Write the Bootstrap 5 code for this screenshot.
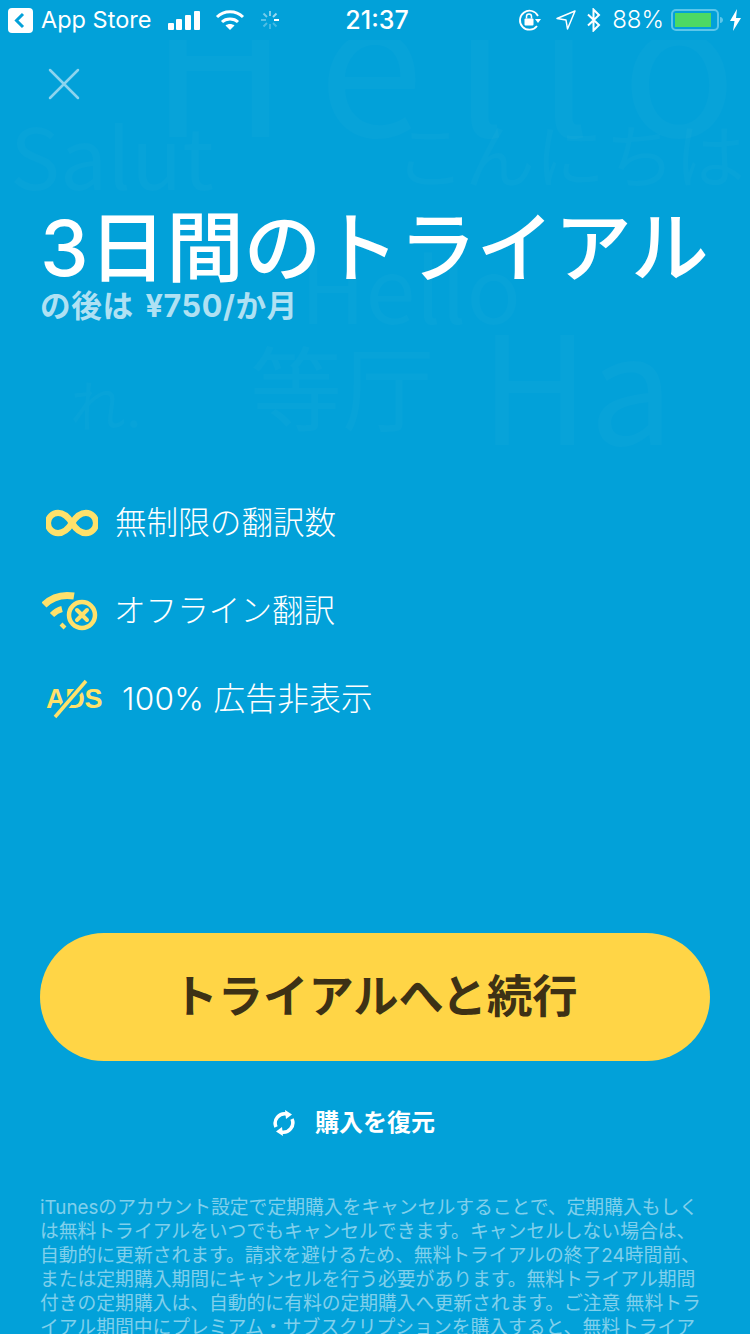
<!DOCTYPE html>
<html lang="ja">
<head>
    <meta charset="UTF-8">
    <title>トライアル</title>
    <link href="https://cdn.jsdelivr.net/npm/bootstrap@5.3.0/dist/css/bootstrap.min.css" rel="stylesheet">
    <style>
        html, body { height: 1334px; overflow: hidden; }
        body { background: #02a1d9; color: #fff; font-family: Inter, "Noto Sans CJK JP", sans-serif; }
        .screen { height: 1334px; overflow: hidden; }
        .status-bar { height: 40px; padding: 0 9px 0 8px; font-size: 24px; line-height: 40px; }
        .status-side { flex: 1 1 0; min-width: 0; }
        .status-left { gap: 14px; }
        .status-right { gap: 10px; }
        .back-app { gap: 8px; font-size: 23.5px; margin-right: 2px; }
        .status-time { font-weight: 500; font-size: 25px; margin-left: 5px; }
        .batt-pct { font-weight: 300; margin-right: -3px; }
        .bolt { margin-left: 7px; }
        .ghost-layer { top: 40px; left: 0; right: 0; height: 410px; overflow: hidden; }
        .ghost { position: absolute; white-space: nowrap; color: rgba(255,255,255,.022); line-height: 1; font-family: "Noto Sans CJK JP", sans-serif; }
        .g1 { left: 150px; top: -80px; font-size: 190px; letter-spacing: 30px; }
        .g2 { left: 10px; top: 72px; font-size: 84px; }
        .g3 { left: 395px; top: 78px; font-size: 70px; }
        .g4 { left: 0; top: 158px; font-size: 46px; }
        .g5 { left: 300px; top: 200px; font-size: 90px; }
        .g6 { left: 0; top: 290px; font-size: 40px; }
        .g7 { left: 265px; top: 282px; font-size: 34px; }
        .g8 { left: 610px; top: 285px; font-size: 44px; }
        .g9 { left: 250px; top: 298px; font-size: 92px; }
        .g10 { left: 480px; top: 265px; font-size: 150px; }
        .g11 { left: 70px; top: 335px; font-size: 56px; }
        .close-x { margin: 28px 0 0 48px; width: 32px; height: 32px; display: block; }
        .trial-title { font-size: 77.6px; font-weight: 500; line-height: 92px; margin: 102px 0 0 40px; white-space: nowrap; }
        .trial-sub { font-size: 30.6px; font-weight: 700; line-height: 40px; margin: -8px 0 0 40px; color: rgba(255,255,255,.7); white-space: nowrap; word-spacing: 4px; letter-spacing: .6px; }
        .perk-list { margin: 173px 0 0 44px; gap: 40px; }
        .perk { height: 48px; font-size: 31.6px; font-weight: 300; white-space: nowrap; }
        .perk-icon { width: 54px; flex: none; margin-left: 2px; margin-right: -1px; }
        .perk-icon-wifi { width: 56px; margin-left: -2px; margin-right: 0; }
        .perk-icon-ads { width: 58px; height: 40px; margin-left: 2px; margin-right: 2px; }
        .perk-wide { letter-spacing: .3px; }
        .ads-word { font-size: 27px; font-weight: 700; color: #ffe16b; font-family: "Liberation Sans", sans-serif; letter-spacing: -.3px; }
        .cta { width: 670px; height: 128px; margin: 210px 0 0 40px; border-radius: 64px; background: #ffd546; border: 0; color: #3d3115; font-size: 45.3px; font-weight: 700; }
        .cta:hover, .cta:active { background: #ffd546 !important; color: #3d3115 !important; }
        .restore { margin: 42px 0 0 272px; gap: 19px; font-size: 24px; font-weight: 700; line-height: 40px; }
        .legal { margin: 53px 0 0 40px; font-size: 18.8px; line-height: 24px; font-weight: 400; white-space: nowrap; color: rgba(255,255,255,.5); }
    </style>
</head>
<body>
<div class="screen position-relative">
    <div class="ghost-layer position-absolute">
        <span class="ghost g1">Hello</span>
        <span class="ghost g2">Salut</span>
        <span class="ghost g3">こんにちは</span>
        <span class="ghost g4">一你好 Hello</span>
        <span class="ghost g5">Hello</span>
        <span class="ghost g6">lpu bet</span>
        <span class="ghost g7">Salut</span>
        <span class="ghost g8">Ciao</span>
        <span class="ghost g9">等厅</span>
        <span class="ghost g10">Ha</span>
        <span class="ghost g11">れ.</span>
    </div>

    <div class="status-bar d-flex align-items-center position-relative">
        <div class="status-side status-left d-flex align-items-center">
            <div class="back-app d-flex align-items-center">
                <svg width="25" height="25" viewBox="0 0 25 25"><rect width="25" height="25" rx="4" fill="#fff"/><path d="M15 6l-6.500 6.500L15 19" fill="none" stroke="#02a1d9" stroke-width="3"/></svg>
                <span>App Store</span>
            </div>
            <svg width="34" height="20" viewBox="0 0 34 20" fill="#fff"><rect x="1" y="13" width="6" height="7" rx="1"/><rect x="9" y="9" width="6" height="11" rx="1"/><rect x="18" y="5" width="6" height="15" rx="1"/><rect x="27" y="1" width="6" height="19" rx="1"/></svg>
            <svg width="30" height="22" viewBox="0 0 30 22" fill="none" stroke="#fff" stroke-width="3"><path d="M2 8c7-7 19-7 26 0"/><path d="M7 13c4-4 12-4 16 0"/><path d="M15 21l-4.500-4.500c2.500-2 6.500-2 9 0z" fill="#fff" stroke="none"/></svg>
            <svg width="22" height="22" viewBox="0 0 22 22" stroke="#fff" stroke-width="2"><path d="M11 2v5" opacity=".5"/><path d="M17.500 4.500L14 8" opacity=".6"/><path d="M15 11h5"/><path d="M14 14l3.500 3.500" opacity=".25"/><path d="M11 15v5" opacity=".25"/><path d="M8 14l-3.500 3.500" opacity=".3"/><path d="M2 11h5" opacity=".35"/><path d="M4.500 4.500L8 8" opacity=".45"/></svg>
        </div>
        <div class="status-time">21:37</div>
        <div class="status-side status-right d-flex align-items-center justify-content-end">
            <svg width="24" height="24" viewBox="0 0 24 24" fill="none"><path d="M20 8A9.500 9.500 0 1 0 19 18" stroke="#fff" stroke-width="1.800"/><path d="M17 11h6l-3 4z" fill="#fff"/><rect x="6.500" y="10.500" width="9" height="7" rx="1" fill="#fff"/><path d="M8.500 10.500V8.500a2.500 2.500 0 0 1 5 0v2" stroke="#fff" stroke-width="1.500"/></svg>
            <svg class="ms-1" width="20" height="20" viewBox="0 0 20 20" fill="none" stroke="#fff" stroke-width="1.500"><path d="M19 1L1 8.500l9 1.500 1.500 9z" stroke-linejoin="round"/></svg>
            <svg width="16" height="24" viewBox="0 0 16 24" fill="none" stroke="#fff" stroke-width="2"><path d="M2 6.500l11 10.500-5.500 5.500V1.500L13 7 2 17.500"/></svg>
            <span class="batt-pct">88%</span>
            <div class="d-flex align-items-center">
                <svg width="52" height="24" viewBox="0 0 52 24"><rect x="1" y="2" width="46" height="20" rx="4" fill="none" stroke="#5cc6ea" stroke-width="2"/><rect x="4" y="5" width="36" height="14" fill="#4cd964"/><path d="M49 9c2 0 3 1.500 3 3s-1 3-3 3z" fill="#5cc6ea"/></svg>
                <svg class="bolt" width="11" height="22" viewBox="0 0 11 22" fill="#fff"><path d="M7 0L0 12h4.500L3 22l8-13H6z"/></svg>
            </div>
        </div>
    </div>

    <svg class="close-x position-relative" viewBox="0 0 32 32" stroke="#8dd4ee" stroke-width="2.500" stroke-linecap="round"><path d="M2 2l28 28M30 2L2 30"/></svg>

    <h1 class="trial-title position-relative">3日間のトライアル</h1>
    <p class="trial-sub position-relative mb-0">の後は ¥750/か月</p>

    <div class="perk-list d-flex flex-column position-relative">
        <div class="perk d-flex align-items-center gap-3">
            <span class="perk-icon d-flex">
                <svg width="52" height="28" viewBox="0 0 54 28" fill="none" stroke="#ffe16b" stroke-width="6.500"><path d="M27 14C22 6 18 3.500 12.500 3.500a10.500 10.500 0 0 0 0 21C18 24.500 22 22 27 14s9-10.500 14.500-10.500a10.500 10.500 0 0 1 0 21C36 24.500 32 22 27 14z"/></svg>
            </span>
            <span>無制限の翻訳数</span>
        </div>
        <div class="perk d-flex align-items-center gap-3">
            <span class="perk-icon perk-icon-wifi d-flex">
                <svg width="56" height="40" viewBox="0 0 56 40" fill="none" stroke="#ffe16b"><path d="M2 14C10 6 20 3 32 5" stroke-width="7"/><path d="M10 24c3-3 6-5 10-6" stroke-width="6"/><path d="M19 33l4 4" stroke-width="4"/><circle cx="40" cy="24" r="13" stroke-width="4.500"/><path d="M35 19l10 10M45 19L35 29" stroke-width="4" stroke-linecap="round"/></svg>
            </span>
            <span>オフライン翻訳</span>
        </div>
        <div class="perk d-flex align-items-center gap-3">
            <span class="perk-icon perk-icon-ads position-relative d-flex align-items-center">
                <span class="ads-word">ADS</span>
                <svg class="position-absolute top-0 start-0" width="58" height="40" viewBox="0 0 58 40"><path d="M9 39L41 1" stroke="#02a1d9" stroke-width="8"/><path d="M9 38L40 2" stroke="#ffe16b" stroke-width="3.500"/></svg>
            </span>
            <span class="perk-wide">100% 広告非表示</span>
        </div>
    </div>

    <button type="button" class="btn cta d-block position-relative">トライアルへと続行</button>

    <div class="restore d-flex align-items-center position-relative">
        <svg width="24" height="26" viewBox="0 0 24 26" fill="none" stroke="#fff" stroke-width="3.500"><path d="M4 17A9.500 9.500 0 0 1 15 4"/><path d="M13 0l7 4.500-6 4.500z" fill="#fff" stroke="none"/><path d="M20 9A9.500 9.500 0 0 1 9 22"/><path d="M11 26l-7-4.500 6-4.500z" fill="#fff" stroke="none"/></svg>
        <span>購入を復元</span>
    </div>

    <p class="legal position-relative">iTunesのアカウント設定で定期購入をキャンセルすることで、定期購入もしく<br>は無料トライアルをいつでもキャンセルできます。キャンセルしない場合は、<br>自動的に更新されます。請求を避けるため、無料トライアルの終了24時間前、<br>または定期購入期間にキャンセルを行う必要があります。無料トライアル期間<br>付きの定期購入は、自動的に有料の定期購入へ更新されます。ご注意 無料トラ<br>イアル期間中にプレミアム・サブスクリプションを購入すると、無料トライア</p>
</div>
<script src="https://cdn.jsdelivr.net/npm/bootstrap@5.3.0/dist/js/bootstrap.bundle.min.js"></script>
</body>
</html>
